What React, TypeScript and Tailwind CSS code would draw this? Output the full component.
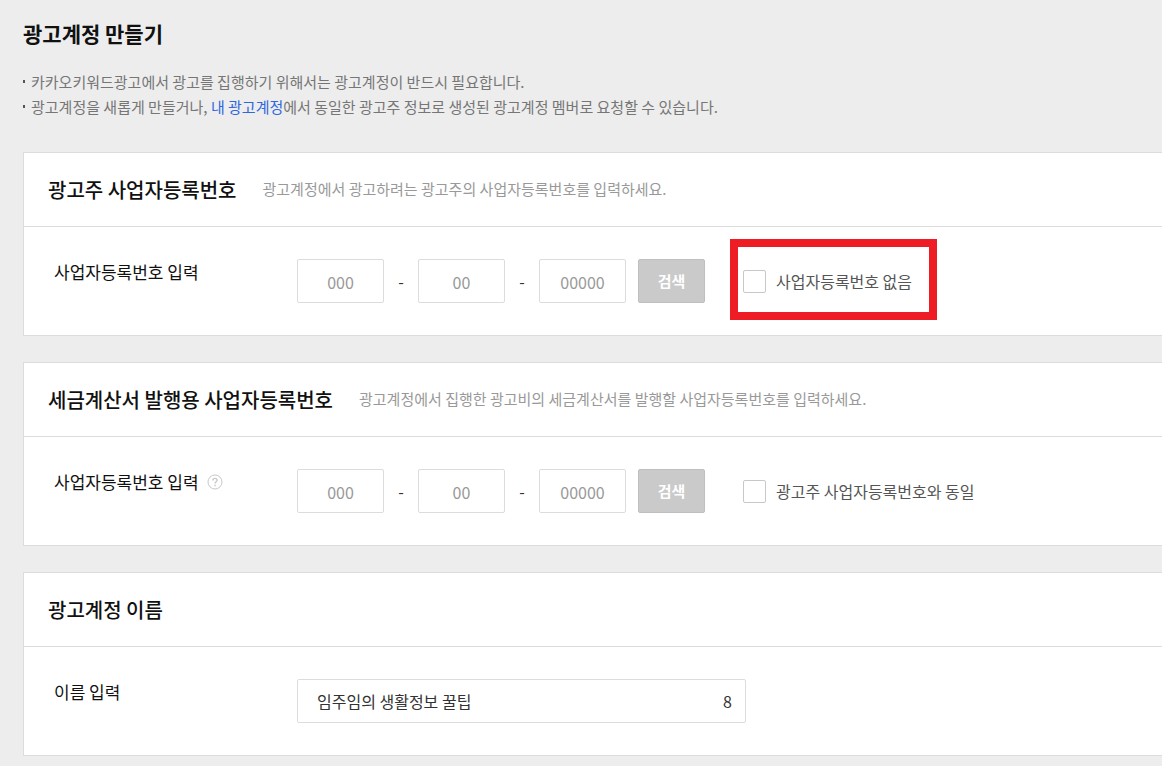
import React from 'react';

const FONT = "font-['Noto_Sans_CJK_KR','Noto_Sans',sans-serif]";

const MAX_NAME_LENGTH = 20;

const NUMBER_PARTS = [
  { placeholder: '000', maxLength: 3 },
  { placeholder: '00', maxLength: 2 },
  { placeholder: '00000', maxLength: 5 },
];

interface SectionProps {
  title: string;
  description?: string;
  children: React.ReactNode;
}

function Section({ title, description, children }: SectionProps) {
  return (
    <section className="border-y border-l border-[#dcdcdc] bg-white">
      <header className="flex min-h-[74px] flex-wrap items-center gap-x-[26px] border-b border-[#dcdcdc] px-6">
        <h2 className="text-xl font-medium text-[#111]">{title}</h2>
        {description && <p className="text-[15px] text-[#999]">{description}</p>}
      </header>
      <div className="flex flex-wrap py-8 pl-[30px]">{children}</div>
    </section>
  );
}

function HelpIcon() {
  return (
    <svg className="h-4 w-4" viewBox="0 0 16 16" fill="none" stroke="#c8c8c8" aria-hidden="true">
      <circle cx="8" cy="8" r="7" />
      <path d="M5.9 6.5c0-1.3.9-2.1 2.1-2.1s2.1.8 2.1 1.9c0 1.5-2 1.5-2 3.2" strokeWidth="1.4" />
      <path d="M7.3 11.4h1.5" strokeWidth="1.5" />
    </svg>
  );
}

interface BusinessNumberFieldProps {
  id: string;
  checkLabel: string;
  help?: boolean;
  highlighted?: boolean;
}

function BusinessNumberField({ id, checkLabel, help, highlighted }: BusinessNumberFieldProps) {
  return (
    <>
      <div className="flex h-[26px] w-[243px] items-center gap-2">
        <label htmlFor={id} className="text-[17px] text-[#111]">
          사업자등록번호 입력
        </label>
        {help && (
          <button type="button" aria-label="도움말">
            <HelpIcon />
          </button>
        )}
      </div>

      <div className="flex flex-wrap items-center">
        {NUMBER_PARTS.map((part, index) => (
          <React.Fragment key={part.placeholder}>
            {index > 0 && <span className="w-[34px] text-center text-base text-[#333]">-</span>}
            <input
              id={index === 0 ? id : `${id}-${index}`}
              type="text"
              aria-label={index === 0 ? undefined : `사업자등록번호 ${index + 1}`}
              maxLength={part.maxLength}
              placeholder={part.placeholder}
              className="h-11 w-[87px] rounded-xs border border-[#dcdcdc] bg-white pt-0.5 text-center text-base text-[#333] placeholder:text-[#999]"
            />
          </React.Fragment>
        ))}
        <button
          type="button"
          className="ml-3 h-11 w-[67px] rounded-xs border border-[#bfbfbf] bg-[#cacaca] text-[15px] font-bold text-white"
        >
          검색
        </button>

        <label className="relative ml-[38px] flex h-11 items-center gap-[10px] text-base text-[#555]">
          <input
            type="checkbox"
            className="h-[23px] w-[23px] appearance-none rounded-xs border border-[#c8c8c8] bg-white checked:bg-[#999]"
          />
          {checkLabel}
          {highlighted && (
            <span className="pointer-events-none absolute -top-5 -left-[13px] h-[81px] w-[207px] border-8 border-[#ee1c25]" />
          )}
        </label>
      </div>
    </>
  );
}

function Notice({ children }: { children: React.ReactNode }) {
  return (
    <li className="flex items-center gap-[6px]">
      <span className="h-[3px] w-[2px] shrink-0 bg-[#555]" />
      <p>{children}</p>
    </li>
  );
}

export default function App() {
  const [name, setName] = React.useState('임주임의 생활정보 꿀팁');

  return (
    <main className={`min-h-screen bg-[#ededed] pt-[15px] pb-3 pl-[23px] ${FONT}`}>
      <h1 className="text-[21px] leading-9 font-bold text-[#111]">광고계정 만들기</h1>

      <ul className="mt-[18px] text-[15px] leading-[25px] text-[#767676]">
        <Notice>카카오키워드광고에서 광고를 집행하기 위해서는 광고계정이 반드시 필요합니다.</Notice>
        <Notice>
          광고계정을 새롭게 만들거나,{' '}
          <a href="#accounts" className="text-[#2f67e0]">
            내 광고계정
          </a>
          에서 동일한 광고주 정보로 생성된 광고계정 멤버로 요청할 수 있습니다.
        </Notice>
      </ul>

      <form className="mt-[33px] flex flex-col gap-[26px]" onSubmit={(e) => e.preventDefault()}>
        <Section
          title="광고주 사업자등록번호"
          description="광고계정에서 광고하려는 광고주의 사업자등록번호를 입력하세요."
        >
          <BusinessNumberField id="advertiser" checkLabel="사업자등록번호 없음" highlighted />
        </Section>

        <Section
          title="세금계산서 발행용 사업자등록번호"
          description="광고계정에서 집행한 광고비의 세금계산서를 발행할 사업자등록번호를 입력하세요."
        >
          <BusinessNumberField id="invoice" checkLabel="광고주 사업자등록번호와 동일" help />
        </Section>

        <Section title="광고계정 이름">
          <div className="flex h-[26px] w-[243px] items-center">
            <label htmlFor="account-name" className="text-[17px] text-[#111]">
              이름 입력
            </label>
          </div>
          <div className="flex h-11 w-[449px] items-center rounded-xs border border-[#dcdcdc] bg-white pr-[13px] pl-[19px] text-base text-[#333]">
            <input
              id="account-name"
              type="text"
              value={name}
              maxLength={MAX_NAME_LENGTH}
              onChange={(e) => setName(e.target.value)}
              className="min-w-0 flex-1 bg-transparent outline-none"
            />
            {/* Characters left */}
            <span>{MAX_NAME_LENGTH - name.length}</span>
          </div>
        </Section>
      </form>
    </main>
  );
}
